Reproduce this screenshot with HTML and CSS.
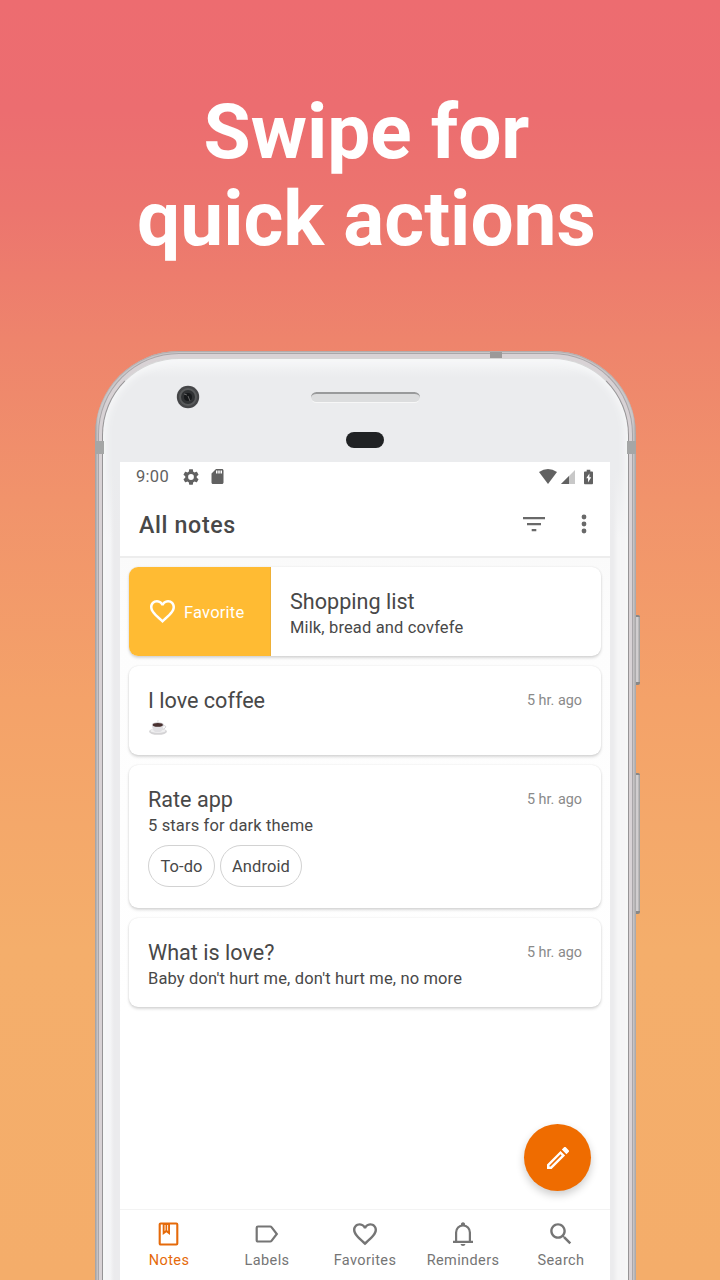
FILE: index.html
```html
<!DOCTYPE html>
<html lang="en">
<head>
<meta charset="utf-8">
<title>Swipe for quick actions</title>
<link rel="stylesheet" href="styles.css">
</head>
<body>
<main class="promo">
  <h1 class="headline"><span class="line-one">Swipe for</span><br><span class="line-two">quick actions</span></h1>
  <div class="phone">
    <i class="button power"></i><i class="button volume"></i>
    <div class="frame"><div class="rim"><div class="face">
      <div class="bezel">
        <svg class="camera" viewBox="0 0 24 24"><circle cx="12" cy="12" r="11.2" fill="#454648"/><circle cx="12" cy="12" r="9" fill="#595b5c"/><circle cx="12" cy="12" r="7" fill="#303234"/><circle cx="12" cy="12" r="4" fill="#17191b"/><path d="M12 11l2 5M8 9l3 1" stroke="#666" stroke-width="1"/></svg>
        <i class="speaker"></i>
        <i class="sensor"></i>
      </div>
      <div class="screen">
        <div class="status">
          <span class="clock">9:00</span>
          <svg class="gear" viewBox="2 2 20 20"><path fill-rule="evenodd" d="M19.14 12.94c.04-.3.06-.61.06-.94s-.02-.64-.07-.94l2.03-1.58c.18-.14.23-.41.12-.61l-1.92-3.32c-.12-.22-.37-.29-.59-.22l-2.39.96c-.5-.38-1.03-.7-1.62-.94L14.4 2.81c-.04-.24-.24-.41-.48-.41h-3.84c-.24 0-.43.17-.47.41L9.25 5.35c-.59.24-1.13.57-1.62.94l-2.39-.96c-.22-.08-.47 0-.59.22L2.74 8.87c-.12.21-.08.47.12.61l2.03 1.58c-.05.3-.09.63-.09.94s.02.64.07.94l-2.03 1.58c-.18.14-.23.41-.12.61l1.92 3.32c.12.22.37.29.59.22l2.39-.96c.5.38 1.03.7 1.62.94l.36 2.54c.05.24.24.41.48.41h3.84c.24 0 .44-.17.47-.41l.36-2.54c.59-.24 1.13-.56 1.62-.94l2.39.96c.22.08.47 0 .59-.22l1.92-3.32c.12-.22.07-.47-.12-.61zM12 15.6A3.6 3.6 0 1 1 12 8.4a3.6 3.6 0 0 1 0 7.2z"/></svg>
          <svg class="sd" viewBox="4 2 16 20"><path fill-rule="evenodd" d="M18 2h-8L4.020 8 4 20c0 1.100.9 2 2 2h12c1.100 0 2-.9 2-2V4c0-1.100-.9-2-2-2zm-6 6h-2V4h2zm3 0h-2V4h2zm3 0h-2V4h2z"/></svg>
          <svg class="wifi" viewBox="0 0 18 15"><path d="M0 3Q9-3 18 3L9 15z"/></svg>
          <svg class="signal" viewBox="0 0 14 14"><path d="M0 14L14 0v14z" opacity=".35"/><path d="M0 14L8 6v8z"/></svg>
          <svg class="battery" viewBox="0 0 10 16"><path fill-rule="evenodd" d="M3 0h4v2h2q1 0 1 1v12q0 1-1 1H1q-1 0-1-1V3q0-1 1-1h2zM6 4L2.500 9.500h2V14L8 8.300H6z"/></svg>
        </div>
        <header class="toolbar">
          <h2>All notes</h2>
          <svg class="filter" viewBox="0 0 22 15"><path d="M0 1.200h22M4 7.200h14M8.700 13.200h4.600" stroke="#696969" stroke-width="2.200"/></svg>
          <svg class="more" viewBox="0 0 6 20"><circle cx="3" cy="3" r="2.400"/><circle cx="3" cy="10" r="2.400"/><circle cx="3" cy="17" r="2.400"/></svg>
        </header>
        <section class="notes">
          <article class="note swiped">
            <div class="favorite"><svg viewBox="2 3 20 18.350"><path d="M16.500 3c-1.740 0-3.410.810-4.500 2.090C10.910 3.810 9.240 3 7.500 3 4.420 3 2 5.420 2 8.500c0 3.780 3.400 6.860 8.550 11.540L12 21.350l1.450-1.320C18.600 15.360 22 12.280 22 8.500 22 5.420 19.580 3 16.500 3zm-4.400 15.550l-.1.100-.1-.1C7.140 14.240 4 11.390 4 8.500 4 6.500 5.500 5 7.500 5c1.540 0 3.040.990 3.570 2.360h1.870C13.460 5.990 14.960 5 16.500 5c2 0 3.500 1.500 3.500 3.500 0 2.890-3.140 5.740-7.900 10.050z"/></svg><span>Favorite</span></div>
            <div class="copy"><h3>Shopping list</h3><p>Milk, bread and covfefe</p></div>
          </article>
          <article class="note">
            <div class="copy"><h3>I love coffee</h3>
              <svg class="cup" viewBox="0 0 20 17"><ellipse cx="10" cy="12.300" rx="9.500" ry="3.500" fill="#d4d3d5"/><ellipse cx="10" cy="11.300" rx="8" ry="2.600" fill="#efeff0"/><path d="M3.500 5q.5 7 4.500 8h3.500q4-1 4.500-8z" fill="#e1e0e3"/><path d="M15.500 6q4-.2 2 2.500-1 1.300-2.800 1.300" fill="none" stroke="#d2d1d4"/><ellipse cx="9.800" cy="5" rx="6.300" ry="2.500" fill="#c8c6ca"/><ellipse cx="9.800" cy="5.200" rx="5.300" ry="1.900" fill="#48302f"/><path d="M10 2q-1-1 .5-2" stroke="#ddd" fill="none"/></svg></div>
            <time>5 hr. ago</time>
          </article>
          <article class="note tall">
            <div class="copy"><h3>Rate app</h3><p>5 stars for dark theme</p>
              <div class="chips"><span class="todo">To-do</span><span class="android">Android</span></div></div>
            <time>5 hr. ago</time>
          </article>
          <article class="note">
            <div class="copy"><h3>What is love?</h3><p>Baby don't hurt me, don't hurt me, no more</p></div>
            <time>5 hr. ago</time>
          </article>
        </section>
        <div class="fab"><svg viewBox="3 3 18 18"><path d="M14.060 9.020l.920.920L5.920 19H5v-.920l9.060-9.060M17.660 3c-.25 0-.51.100-.7.290l-1.830 1.830 3.750 3.750 1.830-1.830c.39-.39.39-1.020 0-1.410l-2.340-2.340c-.2-.2-.45-.29-.71-.29zm-3.600 3.190L3 17.250V21h3.750L17.810 9.940l-3.750-3.750z"/></svg></div>
        <nav class="tabs">
          <div class="tab active"><svg viewBox="0 0 24 24"><path d="M3.700 1.500h15.600q1 0 1 1v19q0 1-1 1H3.700q-1 0-1-1v-19q0-1 1-1z" fill="none" stroke="#e56a0a" stroke-width="2.100"/><path fill-rule="evenodd" d="M5.700 2h7.300v11L9.350 10.200 5.700 13zM7.600 3v5.900l.9-.7V3zm2.600 0v5.200l.9.700V3z"/></svg><span>Notes</span></div>
          <div class="tab"><svg viewBox="0 0 24 24"><path d="M3 4.500h12.200q.8 0 1.300.7l5.300 6.800-5.300 6.800q-.5.700-1.300.7H3q-1.300 0-1.300-1.300V5.800Q1.700 4.500 3 4.500z" fill="none" stroke="#757575" stroke-width="2.200"/></svg><span>Labels</span></div>
          <div class="tab"><svg viewBox="2 2 20 20"><path d="M16.500 3c-1.740 0-3.410.810-4.500 2.090C10.910 3.810 9.240 3 7.500 3 4.420 3 2 5.420 2 8.500c0 3.780 3.400 6.860 8.550 11.540L12 21.350l1.450-1.320C18.600 15.360 22 12.280 22 8.500 22 5.420 19.580 3 16.500 3zm-4.400 15.550l-.1.100-.1-.1C7.140 14.240 4 11.390 4 8.500 4 6.500 5.500 5 7.500 5c1.540 0 3.040.990 3.570 2.360h1.870C13.460 5.990 14.960 5 16.500 5c2 0 3.500 1.500 3.500 3.500 0 2.890-3.140 5.740-7.900 10.050z"/></svg><span>Favorites</span></div>
          <div class="tab"><svg viewBox="0 0 24 24"><path d="M5.100 20V10.500C5.100 6.500 8 3.500 12 3.500s6.900 3 6.900 7V20" fill="none" stroke="#757575" stroke-width="2.200"/><path d="M2 18.800h20V21H2zM10 3V1.500Q12-.8 14 1.500V3zM9.500 22h5q-.4 2-2.500 2t-2.500-2z"/></svg><span>Reminders</span></div>
          <div class="tab"><svg viewBox="2 2 20 20"><path d="M15.500 14h-.79l-.28-.27C15.410 12.590 16 11.110 16 9.500 16 5.910 13.090 3 9.500 3S3 5.910 3 9.500 5.910 16 9.500 16c1.610 0 3.090-.59 4.230-1.570l.27.280v.79l5 4.990L20.490 19l-4.990-5zm-6 0C7.010 14 5 11.990 5 9.500S7.010 5 9.500 5 14 7.010 14 9.500 11.990 14 9.500 14z"/></svg><span>Search</span></div>
        </nav>
      </div>
    </div></div></div>
    <i class="antenna left"></i><i class="antenna right"></i><i class="antenna top"></i>
  </div>
</main>
</body>
</html>
```
FILE: styles.css
```css
* { box-sizing: border-box; }
body { margin: 0; font-family: Roboto, sans-serif; color: #484848; }
h1, h2, h3, p { margin: 0; font-weight: 400; }
svg { display: block; fill: #616161; flex: none; }
.promo { width: 720px; height: 1280px; overflow: hidden; background: linear-gradient(#ed6c70 0, #ec6d70 110px, #ec756e 210px, #ee846c 340px, #f1936b 500px, #f4a269 700px, #f4ae6b 950px, #f4ad6a 1280px); padding: 89px 0 0 95px; }
.headline { width: 543px; height: 262px; text-align: center; color: #fff; font-size: 76.600px; line-height: 87px; font-weight: 700; white-space: nowrap; }
.phone { position: relative; width: 541px; height: 1000px; }
.frame { position: relative; height: 1000px; padding: 2px 3px 0; border-radius: 84px 84px 0 0; background: linear-gradient(90deg, #a09e9f, #cbc8ca 3px, #cbc8ca 538px, #a5a4a5); box-shadow: inset 0 1px 1px #b0a8a8; }
.rim { height: 100%; padding: 4px 3px 0; border: 1px solid #aaa6a9; border-bottom: 0; border-radius: 81px 81px 0 0; background: #d8d2d5; }
.face { height: 100%; padding: 0 14px 0 16px; border: 1px solid #969496; border-top-color: #d6d6d6; border-bottom: 0; border-radius: 77px 77px 0 0; background: linear-gradient(#f6f7f8, #ebecee 18px, #ebecee 110px, transparent 180px), linear-gradient(90deg, #f5f5f6 0, #f5f5f6 7px, #ebebed 11px, #ebebed 510px, #f5f5f6 515px); box-shadow: inset 0 0 7px 3px #f6f7f8; }
.bezel { position: relative; height: 103px; }
.camera { position: absolute; left: 56.500px; top: 25.500px; width: 24px; height: 24px; }
.speaker { position: absolute; left: 192px; top: 33px; width: 109px; height: 11px; border-radius: 6px; background: #dcddde; border-top: 2px solid #999a9b; border-bottom: 1px solid #f7f7f7; }
.sensor { position: absolute; left: 227px; top: 73px; width: 38px; height: 16px; border-radius: 8px; background: #202224; }
.screen { position: relative; display: flex; flex-direction: column; width: 490px; margin-left: 1px; height: 818px; background: #fff; }
.status { display: flex; align-items: center; height: 29px; padding-left: 16px; }
.clock { font-size: 16.500px; letter-spacing: .3px; width: 47px; color: #616161; }
.gear { width: 16px; height: 16px; }
.sd { width: 13px; height: 15px; margin-left: 12px; }
.wifi { width: 18px; height: 15px; margin-left: 315px; }
.signal { width: 14px; height: 14px; margin-left: 4px; }
.battery { width: 9px; height: 16px; margin-left: 9px; }
.toolbar { display: flex; align-items: center; height: 67px; padding: 1px 22px 0 19px; border-bottom: 2px solid #ededed; }
.toolbar h2 { flex: 1; font-size: 23.200px; font-weight: 500; letter-spacing: .65px; line-height: 30px; padding-top: 1px; }
.filter { width: 22px; height: 15px; margin-right: 35px; }
.more { width: 8px; height: 20px; fill: #696969; }
.notes { display: flex; flex-direction: column; gap: 10px; flex: 1; padding: 9px; background: #fdfdfd linear-gradient(#fafafa, #fdfdfd 80px, #fff 460px); }
.note { display: flex; justify-content: space-between; height: 89px; flex: none; padding: 21px 19px 0; border-radius: 9px; background: #fff; box-shadow: 0 2px 3px #00000026, 0 0 2px #0000001a; }
.tall { height: 143px; }
.swiped { justify-content: flex-start; padding: 0; overflow: hidden; }
.swiped .copy { padding: 21px 19px; }
.favorite { display: flex; align-items: center; gap: 9px; width: 142px; padding-left: 21px; border-right: 1px solid #eeb037; background: #ffbb33; color: #fff; font-size: 16.500px; letter-spacing: .2px; }
.favorite svg { width: 25px; height: 23px; fill: #fff; }
.favorite span { padding-top: 2px; }
.note h3 { font-size: 21.600px; line-height: 28px; white-space: nowrap; }
.note p { font-size: 16.500px; letter-spacing: .14px; line-height: 24px; white-space: nowrap; }
.swiped p { line-height: 23px; }
time { font-size: 14.400px; line-height: 28px; color: #8a8a8a; white-space: nowrap; }
.cup { width: 20px; height: 16px; margin-top: 5px; }
.chips { display: flex; gap: 5px; margin-top: 7px; }
.chips span { height: 42px; border: 1px solid #d2d2d2; border-radius: 21px; font-size: 16.500px; letter-spacing: .1px; line-height: 41px; text-align: center; }
.todo { width: 67px; }
.android { width: 82px; }
.fab { position: absolute; left: 404px; top: 662px; width: 67px; height: 67px; display: grid; place-items: center; border-radius: 50%; background: #ef6c00; box-shadow: 0 4px 8px #0003; }
.fab svg { width: 22px; height: 22px; fill: #fff; }
.tabs { display: flex; height: 71px; padding-top: 12px; border-top: 1px solid #f3f3f3; background: #fff; }
.tab { flex: 1; display: flex; flex-direction: column; align-items: center; color: #757575; font-size: 14.500px; line-height: 20px; letter-spacing: .4px; }
.tab svg { width: 24px; height: 24px; margin-bottom: 5px; fill: #757575; }
.active { color: #e56a0a; }
.active svg { fill: #e56a0a; }
.antenna { position: absolute; background: #a5a6a6; }
.left, .right { top: 90px; width: 9px; height: 13px; }
.left { left: 0; }
.right { right: 0; }
.top { left: 395px; top: 1px; width: 12px; height: 6px; background: #9b9999; }
.button { position: absolute; right: -4px; width: 7px; border-radius: 2px; background: linear-gradient(90deg, #aaa, #d8d4d6 60%, #999); border-top: 2px solid #888; border-bottom: 3px solid #888; }
.power { top: 264px; height: 70px; }
.volume { top: 422px; height: 141px; }
```
